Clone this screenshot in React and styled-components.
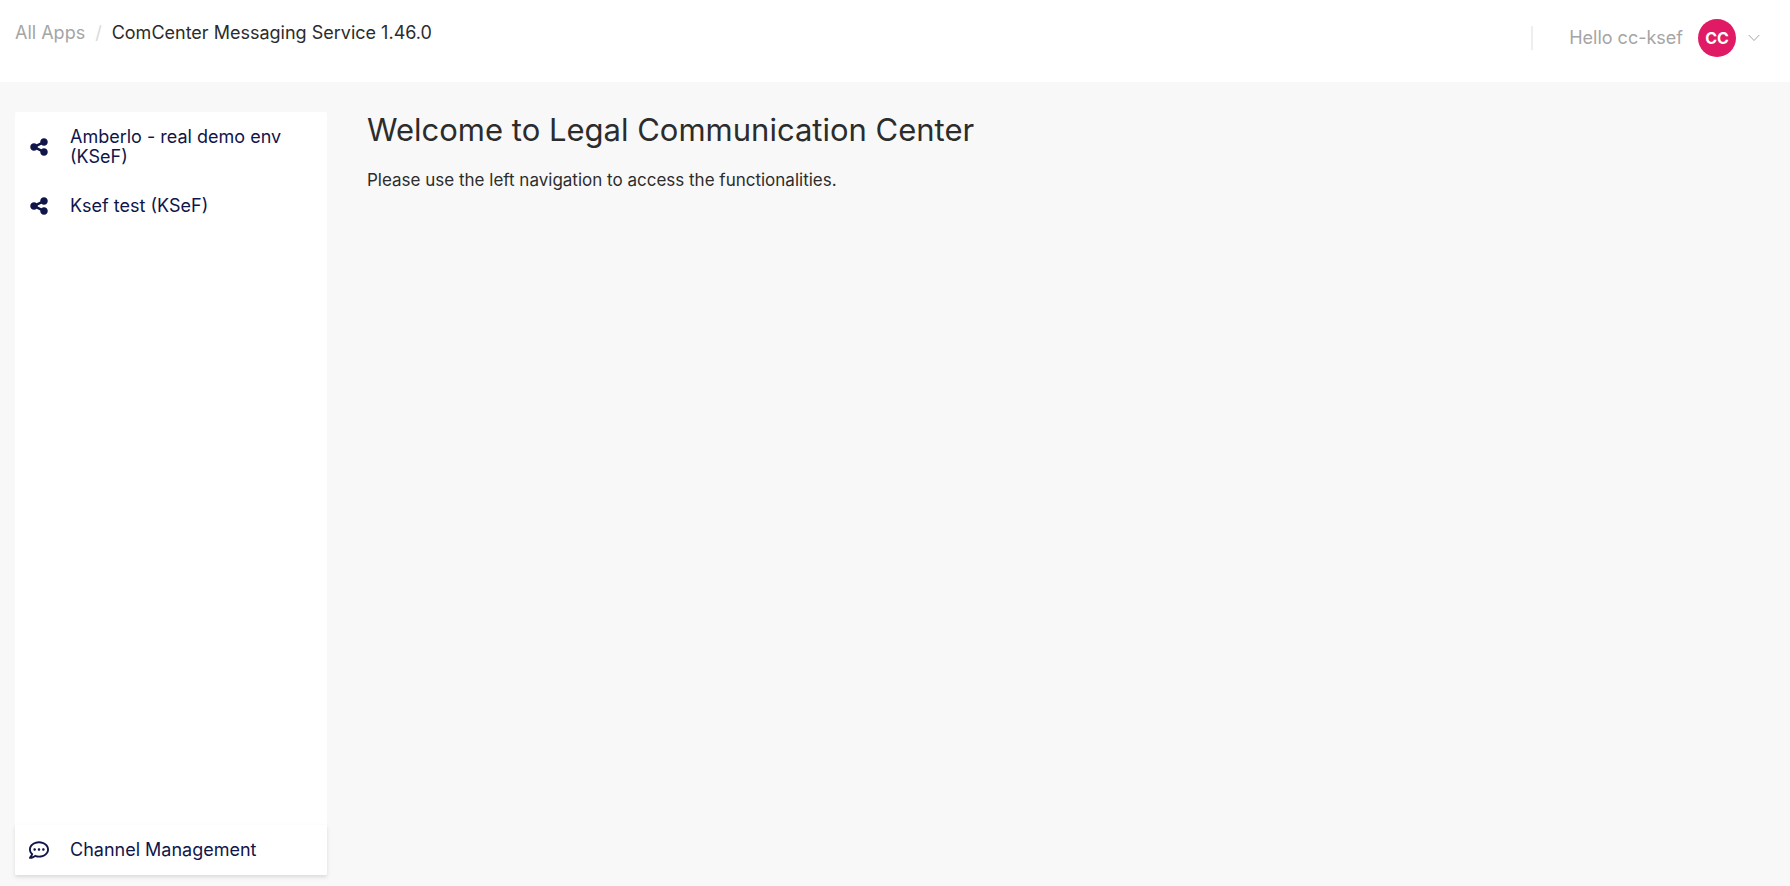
import styled, { createGlobalStyle } from 'styled-components';
import { FaRegCommentDots } from 'react-icons/fa';
import { FaShareNodes } from 'react-icons/fa6';

const channels = ['Amberlo - real demo env (KSeF)', 'Ksef test (KSeF)'];

const App = () => {
  return (
    <Page>
      <GlobalStyle />

      <Header>
        <Breadcrumb aria-label="Breadcrumb">
          <a href="#apps">All Apps</a>
          <Separator>/</Separator>
          <span>ComCenter Messaging Service 1.46.0</span>
        </Breadcrumb>

        <UserButton type="button">
          <UserName>Hello cc-ksef</UserName>
          <Avatar>CC</Avatar>
          <Chevron viewBox="0 0 12 8" aria-hidden="true">
            <path d="M0.7 1l5.3 5.5L11.3 1" />
          </Chevron>
        </UserButton>
      </Header>

      <Body>
        <Sidebar>
          <NavList>
            {channels.map(channel => (
              <li key={channel}>
                <NavLink href="#channel">
                  <FaShareNodes size={20} />
                  <span>{channel}</span>
                </NavLink>
              </li>
            ))}
          </NavList>

          <SidebarFooter>
            <NavLink href="#management">
              <FaRegCommentDots size={20} />
              <span>Channel Management</span>
            </NavLink>
          </SidebarFooter>
        </Sidebar>

        <Content>
          <Title>Welcome to Legal Communication Center</Title>
          <Description>Please use the left navigation to access the functionalities.</Description>
        </Content>
      </Body>
    </Page>
  );
};

export default App;

const GlobalStyle = createGlobalStyle`
  * {
    box-sizing: border-box;
  }

  body {
    margin: 0;
    background: #f8f8f8;
    color: #2c2c2c;
    font-family: Inter, sans-serif;
    font-size: 18px;
    line-height: 20px;
  }

  a {
    color: inherit;
    text-decoration: none;
  }
`;

const Page = styled.div`
  display: flex;
  flex-direction: column;

  min-height: 100vh;
`;

const Header = styled.header`
  display: flex;
  justify-content: space-between;
  align-items: flex-start;

  min-height: 82px;
  padding: 19px 30px 0 15px;

  background: #fff;
`;

const Breadcrumb = styled.nav`
  display: flex;

  padding-top: 4px;
  gap: 10px;

  a {
    color: #a5a5a5;
  }
`;

const Separator = styled.span`
  color: #d9d9d9;
`;

const UserButton = styled.button`
  display: flex;
  align-items: center;

  padding: 0;

  border: 0;
  background: none;
  color: #a5a5a5;
  font: inherit;
  cursor: pointer;
`;

const UserName = styled.span`
  padding: 2px 15px 2px 36px;

  border-left: 2px solid #eee;
`;

const Avatar = styled.span`
  display: flex;
  justify-content: center;
  align-items: center;

  width: 38px;
  height: 38px;

  border-radius: 50%;
  background: #e01a64;
  color: #fff;
  font-size: 16px;
  font-weight: 700;
`;

const Chevron = styled.svg`
  width: 12px;
  height: 8px;
  margin-left: 12px;

  fill: none;
  stroke: #a5a5a5;
`;

const Body = styled.div`
  display: flex;
  flex: 1;

  padding: 30px 15px 11px;
  gap: 40px;
`;

const Sidebar = styled.aside`
  display: flex;
  flex-direction: column;
  justify-content: space-between;

  flex: 0 0 312px;

  border-radius: 2px;
  background: #fff;
`;

const NavList = styled.ul`
  display: flex;
  flex-direction: column;

  margin: 0;
  padding: 1px 0 0;
  gap: 1px;

  list-style: none;
`;

const NavLink = styled.a`
  display: grid;
  grid-template-columns: 20px 1fr;
  align-items: center;

  padding: 14px 30px 14px 14px;
  column-gap: 21px;

  color: #10154a;
`;

const SidebarFooter = styled.div`
  padding: 1px 0;

  box-shadow: 0 2px 4px rgba(0, 0, 0, 0.12);
`;

const Content = styled.main`
  flex: 1;
`;

const Title = styled.h1`
  margin: 0 0 22px;

  font-size: 31px;
  font-weight: 400;
  line-height: 36px;
`;

const Description = styled.p`
  margin: 0;

  font-size: 17px;
`;
